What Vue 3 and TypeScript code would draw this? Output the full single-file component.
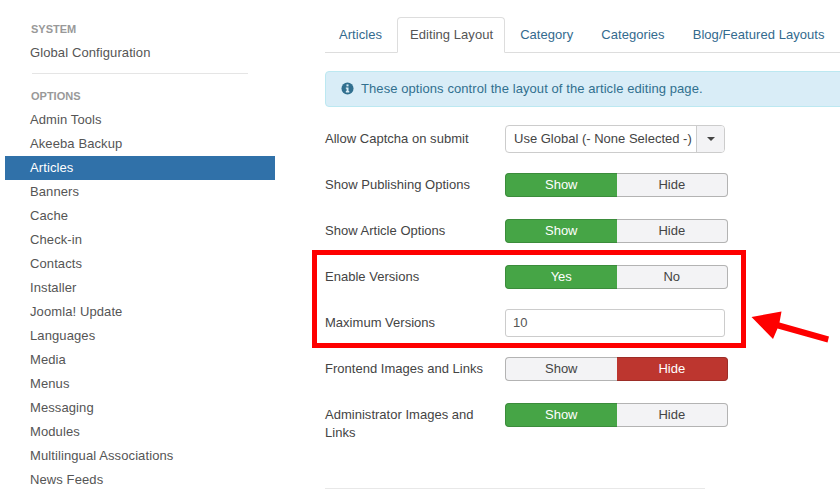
<script setup lang="ts">
interface Row { label: string; kind: 'toggle' | 'select' | 'input'; a?: string; b?: string; state?: 'a' | 'b'; value?: string }
const sidebar = ['Admin Tools','Akeeba Backup','Articles','Banners','Cache','Check-in','Contacts','Installer','Joomla! Update','Languages','Media','Menus','Messaging','Modules','Multilingual Associations','News Feeds']
const tabs = ['Articles','Editing Layout','Category','Categories','Blog/Featured Layouts']
const rows: Row[] = [
  { label: 'Allow Captcha on submit', kind: 'select', value: 'Use Global (- None Selected -)' },
  { label: 'Show Publishing Options', kind: 'toggle', a: 'Show', b: 'Hide', state: 'a' },
  { label: 'Show Article Options', kind: 'toggle', a: 'Show', b: 'Hide', state: 'a' },
  { label: 'Enable Versions', kind: 'toggle', a: 'Yes', b: 'No', state: 'a' },
  { label: 'Maximum Versions', kind: 'input', value: '10' },
  { label: 'Frontend Images and Links', kind: 'toggle', a: 'Show', b: 'Hide', state: 'b' },
  { label: 'Administrator Images and Links', kind: 'toggle', a: 'Show', b: 'Hide', state: 'a' },
]
</script>

<template>
  <div class="page">
    <aside class="side">
      <div class="head">SYSTEM</div>
      <a class="item">Global Configuration</a>
      <div class="rule"></div>
      <div class="head">OPTIONS</div>
      <a v-for="s in sidebar" :key="s" class="item" :class="{ active: s === 'Articles' }">{{ s }}</a>
    </aside>
    <main class="main">
      <nav class="tabs">
        <span v-for="t in tabs" :key="t" class="tab" :class="{ on: t === 'Editing Layout' }">{{ t }}</span>
      </nav>
      <div class="alert">
        <svg class="info" viewBox="0 0 14 14" width="13" height="13">
          <circle cx="7" cy="7" r="6.5" fill="#31708f" />
          <rect x="5.9" y="2.6" width="2.2" height="2.1" fill="#d9edf7" />
          <path d="M5.2 5.9h2.9v3.9h.8v1.4H5.2V9.8h.8V7.3h-.8z" fill="#d9edf7" />
        </svg>
        <span>These options control the layout of the article editing page.</span>
      </div>
      <form class="form">
        <div v-for="r in rows" :key="r.label" class="row">
          <label class="lbl">{{ r.label }}</label>
          <div v-if="r.kind === 'select'" class="select">
            <span class="val">{{ r.value }}</span>
            <span class="caret"><i></i></span>
          </div>
          <div v-else-if="r.kind === 'input'" class="input">{{ r.value }}</div>
          <div v-else class="toggle">
            <span class="opt" :class="{ yes: r.state === 'a' }">{{ r.a }}</span>
            <span class="opt" :class="{ no: r.state === 'b' }">{{ r.b }}</span>
          </div>
        </div>
      </form>
      <div class="foot"></div>
    </main>
    <div class="mark"></div>
    <svg class="arrow" viewBox="0 0 90 40" width="90" height="40">
      <path d="M1.5 7 L31.5 1.5 L29.5 12.5 L79 26.5 L77.5 32.5 L27.5 18.5 L23 29 Z" fill="#fe0000" />
    </svg>
  </div>
</template>

<style scoped>
.page {
  position: relative;
  width: 840px;
  height: 497px;
  overflow: hidden;
  display: flex;
  background: #fff;
  font-family: "Liberation Sans", Arial, sans-serif;
  font-size: 13px;
  color: #515151;
}
.side {
  width: 270px;
  margin-left: 5px;
  flex: none;
  padding-top: 17px;
}
.head {
  height: 24px;
  line-height: 24px;
  padding-left: 26px;
  font-size: 11px;
  font-weight: 700;
  color: #999;
}
.item {
  display: block;
  height: 24px;
  line-height: 24px;
  padding-left: 25px;
  color: #555;
  letter-spacing: 0.1px;
}
.item.active {
  background: #3071a9;
  color: #fff;
}
.rule {
  height: 1px;
  margin: 8px 27px 10px;
  background: #e5e5e5;
}
.main {
  margin-left: 50px;
  width: 515px;
  flex: none;
  padding-top: 17px;
}
.tabs {
  display: flex;
  height: 36px;
  border-bottom: 1px solid #ddd;
  box-sizing: border-box;
}
.tab {
  box-sizing: border-box;
  height: 36px;
  line-height: 34px;
  padding: 0 13px;
  color: #336a8e;
  border: 1px solid transparent;
  white-space: nowrap;
  letter-spacing: 0.05px;
}
.tab.on {
  margin: 0 1px;
  padding: 0 11px 0 12px;
  color: #555;
  background: #fff;
  border-color: #ddd #ddd #fff;
  border-radius: 4px 4px 0 0;
}
.alert {
  display: flex;
  align-items: center;
  gap: 7px;
  box-sizing: border-box;
  height: 36px;
  margin-top: 18px;
  padding: 0 0 2px 15px;
  width: 530px;
  background: #d9edf7;
  border: 1px solid #bce8f1;
  border-radius: 4px 0 0 4px;
  color: #31708f;
  letter-spacing: 0.08px;
}
.info { flex: none; }
.form {
  margin-top: 18px;
}
.row {
  display: flex;
  align-items: flex-start;
  height: 46px;
  box-sizing: border-box;
}
.lbl {
  width: 180px;
  padding: 5px 20px 0 0;
  box-sizing: border-box;
  color: #444;
  line-height: 18px;
  letter-spacing: 0.02px;
}
.toggle {
  display: flex;
  width: 223px;
  height: 24px;
  margin-top: 2px;
}
.opt {
  box-sizing: border-box;
  flex: 1;
  text-align: center;
  line-height: 22px;
  background: #f3f3f5;
  border: 1px solid #b3b3b3;
  color: #444;
}
.opt:first-child { border-radius: 4px 0 0 4px; border-right: 0; }
.opt:last-child { border-radius: 0 4px 4px 0; border-left: 0; }
.opt.yes { background: #46a546; border-color: #3b8c3b; color: #fff; }
.opt.no { background: #bd362f; border-color: #9c2d27; color: #fff; }
.select {
  display: flex;
  box-sizing: border-box;
  width: 220px;
  height: 28px;
  border: 1px solid #ccc;
  border-radius: 4px;
  color: #444;
  line-height: 26px;
}
.val { flex: 1; padding-left: 8px; white-space: nowrap; }
.caret {
  width: 27px;
  flex: none;
  display: flex;
  align-items: center;
  justify-content: center;
  background: #f3f3f5;
  border-left: 1px solid #ccc;
  border-radius: 0 3px 3px 0;
}
.caret i {
  width: 0;
  height: 0;
  border-left: 4px solid transparent;
  border-right: 4px solid transparent;
  border-top: 4px solid #444;
}
.input {
  box-sizing: border-box;
  width: 220px;
  height: 28px;
  line-height: 26px;
  padding-left: 7px;
  border: 1px solid #ccc;
  border-radius: 3px;
  color: #555;
}
.foot {
  height: 1px;
  width: 380px;
  margin-top: 41px;
  background: #e8e8e8;
}
.mark {
  position: absolute;
  left: 312px;
  top: 250px;
  width: 434px;
  height: 98px;
  box-sizing: border-box;
  border: 5px solid #fe0000;
  pointer-events: none;
}
.arrow {
  position: absolute;
  left: 750px;
  top: 310px;
}
</style>
